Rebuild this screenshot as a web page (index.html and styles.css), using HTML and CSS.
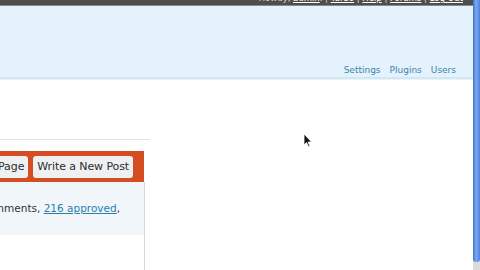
FILE: index.html
```html
<!DOCTYPE html>
<html>
<head>
<meta charset="utf-8">
<link rel="stylesheet" href="styles.css">
</head>
<body>
<div class="window">
  <div class="page">
    <div class="topbar">
      <div class="userinfo">Howdy, <a>admin</a>. | <a>Turbo</a> | <a>Help</a> | <a>Forums</a> | <a>Log Out</a></div>
    </div>
    <div class="header">
      <nav class="submenu"><a>Settings</a><a>Plugins</a><a>Users</a></nav>
    </div>
    <div class="main">
      <div class="panel">
        <div class="actions">
          <span class="btn">Write a New Page</span>
          <span class="btn">Write a New Post</span>
        </div>
        <div class="stats">You have 231 comments, <a>216 approved</a>,</div>
        <div class="rest"></div>
      </div>
    </div>
  </div>
  <div class="scrollbar"><div class="thumb"></div></div>
</div>
<svg class="cursor" width="10" height="16" viewBox="0 0 10 16"><path d="M1 1 L1 12 L3.6 9.6 L5.6 14 L7 13.3 L5.1 9 L8.6 9 Z" fill="#111" stroke="#fff" stroke-width="0.8"/></svg>
</body>
</html>
```
FILE: styles.css
```css
html, body { margin: 0; padding: 0; }
body { width: 480px; height: 270px; overflow: hidden; background: #fff; font-family: "DejaVu Sans", sans-serif; position: relative; }
.window { display: flex; height: 270px; }
.page { width: 473px; flex: none; display: flex; flex-direction: column; overflow: hidden; }
.page > * { flex: none; }
.topbar { height: 5px; background: #4e4e4e; border-bottom: 1px solid #8a8a8a; overflow: hidden; display: flex; justify-content: flex-end; }
.userinfo { font-size: 8.5px; color: #d8d8d8; line-height: 9px; margin-top: -6px; padding-right: 10px; white-space: nowrap; }
.userinfo a { color: #fff; text-decoration: underline; }
.header { height: 71px; background: #e4f2fd; border-bottom: 2px solid #d2e6f3; box-shadow: 0 1px 0 #eaf3f7; display: flex; align-items: flex-end; justify-content: flex-end; }
.submenu { display: flex; gap: 9px; padding: 0 17px 1px 0; font-size: 9px; line-height: 12px; }
.submenu a { color: #3e84aa; }
.main { padding-top: 60px; }
.panel { margin-left: -156px; width: 306px; border-top: 1px solid #e4e4e4; padding-top: 11px; display: flex; flex-direction: column; }
.actions { width: 300px; background: #d54e21; padding: 0 11px 0 4px; display: flex; justify-content: flex-end; gap: 5px; box-sizing: border-box; height: 31px; align-items: center; }
.btn { background: #eef0f2; border-radius: 3px; padding: 0 4px; height: 22px; line-height: 22px; font-size: 11px; color: #2c2c2c; white-space: nowrap; letter-spacing: -0.1px; }
.stats { width: 301px; height: 53px; background: #f1f6fa; border-right: 1px solid #d8d8d8; font-size: 10.5px; color: #333; padding: 20px 24px 0 0; box-sizing: border-box; white-space: nowrap; text-align: right; }
.stats a { color: #2a7fae; text-decoration: underline; }
.rest { width: 301px; height: 40px; border-right: 1px solid #d8d8d8; box-sizing: border-box; }
.scrollbar { width: 7px; flex: none; background: #dcdcdc; display: flex; flex-direction: column; }
.thumb { height: 262px; background: linear-gradient(to right, #3f6fd0, #7ea8ef 45%, #4c80de); border-radius: 0 0 3px 3px; }
.cursor { position: absolute; left: 303px; top: 133px; }
```
